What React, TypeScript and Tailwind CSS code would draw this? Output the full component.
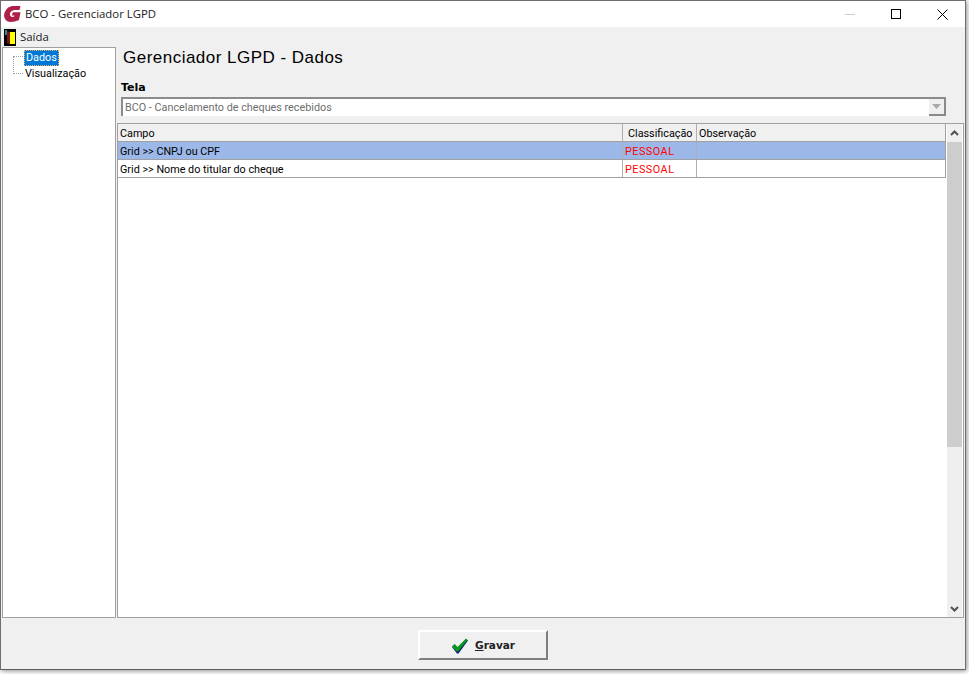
const rows = [
  { campo: 'Grid >> CNPJ ou CPF', selected: true },
  { campo: 'Grid >> Nome do titular do cheque', selected: false },
];

function AppLogo() {
  return (
    <svg width="17" height="16" viewBox="0 0 17 16">
      <path d="M8 0 L16.5 0 L15.5 4 L10.5 4 Q6.5 4.5 6 7.5 Q5.8 10.8 8.5 11 L10 10.8 L10.5 9.5 L7.8 9.5 L8.8 6.3 L16.5 6.3 L15 14 Q11 16 6.5 16 Q0.5 15.5 0 9.5 Q0.5 2 8 0 Z" fill="#b01f48" />
    </svg>
  );
}

function ExitIcon() {
  return (
    <svg width="12" height="17" viewBox="0 0 12 17">
      <rect x="0" y="0" width="12" height="17" fill="#000" />
      <rect x="1" y="1" width="2" height="5" fill="#1f8a9a" />
      <rect x="6" y="3" width="5" height="12" fill="#ffff00" />
      <path d="M3 2 L6 3 L6 15 L3 14 Z" fill="#7a1414" />
    </svg>
  );
}

function GreenCheck() {
  return (
    <svg width="18" height="18" viewBox="0 0 18 18">
      <path d="M1 10 L4 7.5 L7 11 L15 2 L17 3.5 L7.5 16.5 L6 16.5 Z" fill="#0b1f7a" />
      <path d="M1 9.5 L3.5 7 L6.5 10 L15 1.5 L16.5 3 L7 14.5 L5.5 14.5 Z" fill="#0c9a1c" />
    </svg>
  );
}

export default function App() {
  return (
    <div className="h-[674px] w-[969px] overflow-hidden bg-white font-['Roboto',sans-serif] text-[10.8px] text-black">
      <div className="flex h-[670px] w-[966px] flex-col border border-x-[#6e6e6e] border-t-[#6e6e6e] border-b-[#5f5f5f] bg-[#f0f0f0] shadow-[1px_1px_5px_rgba(0,0,0,0.45)]">
        {/* Title bar */}
        <div className="flex h-[26px] shrink-0 items-center bg-white pl-[3px]">
          <AppLogo />
          <span className="ml-[4px] font-['Open_Sans',sans-serif] text-[11.4px] text-[#1a1a1a]">BCO - Gerenciador LGPD</span>
          <div className="ml-auto flex items-center">
            <div className="flex w-[46px] justify-center"><div className="h-px w-[10px] bg-[#cccccc]" /></div>
            <div className="flex w-[46px] justify-center"><div className="size-[10px] border border-black" /></div>
            <div className="flex w-[46px] justify-center">
              <svg width="11" height="11" viewBox="0 0 11 11"><path d="M0.5 0.5 L10.5 10.5 M10.5 0.5 L0.5 10.5" stroke="#000" fill="none" /></svg>
            </div>
          </div>
        </div>

        {/* Menu */}
        <div className="flex h-[20px] shrink-0 items-center pl-[3px]">
          <ExitIcon />
          <span className="ml-[4px] font-['Open_Sans',sans-serif] text-[11.4px] text-[#1a1a1a]">Saída</span>
        </div>

        <div className="flex h-[571px] shrink-0 pl-px">
          {/* Tree */}
          <div className="relative h-[571px] w-[114px] border border-[#a0a0a0] bg-white">
            <div className="absolute top-[8px] left-[10px] h-[18px] w-[10px] border-b border-l border-dotted border-[#a0a0a0]" />
            <div className="absolute top-[8px] left-[10px] w-[10px] border-b border-dotted border-[#a0a0a0]" />
            <div className="flex flex-col items-start pt-[2px] pl-[21px]">
              <div className="flex h-[16px] items-center border border-dotted border-[#f0b060] bg-[#0078d7] px-px text-white">Dados</div>
              <div className="flex h-[16px] items-center px-px">Visualização</div>
            </div>
          </div>

          {/* Content */}
          <div className="flex h-[571px] min-w-0 flex-1 flex-col pr-px pl-px">
            <div className="flex h-[50px] shrink-0 flex-col pl-[6px]">
              <div className="mt-px font-['Liberation_Sans',sans-serif] text-[17px] leading-[20px] tracking-[0.48px]">Gerenciador LGPD - Dados</div>
              <div className="-ml-[2px] mt-[13px] font-['DejaVu_Sans',sans-serif] text-[11px] leading-[14px] font-bold">Tela</div>
            </div>

            <div className="mr-[18px] ml-[4px] flex h-[19px] shrink-0 items-center justify-between border-t-2 border-l-2 border-[#8c8c8c] bg-white pl-[2px] text-[#6d6d6d]">
              <span className="pt-px">BCO - Cancelamento de cheques recebidos</span>
              <div className="flex h-[17px] w-[17px] items-center justify-center border-r-2 border-b-2 border-r-[#8a8a8a] border-b-[#8a8a8a] bg-[#efefef]">
                <svg width="9" height="5" viewBox="0 0 9 5"><path d="M0 0 H9 L4.5 5 Z" fill="#a8a8a8" /></svg>
              </div>
            </div>

            {/* Grid */}
            <div className="mt-[7px] flex min-h-0 flex-1 border border-[#a0a0a0] bg-white">
              <div className="min-w-0 flex-1 pr-px">
                <div className="flex h-[18px] border-r border-b border-[#a0a0a0] bg-[#f0f0f0]">
                  <div className="w-[505px] border-r border-[#b0b0b0] pl-[2px] leading-[19px]">Campo</div>
                  <div className="w-[74px] border-r border-[#b0b0b0] pl-[5px] leading-[19px]">Classificação</div>
                  <div className="flex-1 pl-[2px] leading-[19px]">Observação</div>
                </div>
                {rows.map((row) => (
                  <div key={row.campo} className={`flex h-[18px] border-r border-b border-[#a0a0a0] ${row.selected ? 'bg-[#9cb8e8]' : 'bg-white'}`}>
                    <div className="w-[505px] border-r border-[#b0b0b0] pl-[2px] leading-[19px]">{row.campo}</div>
                    <div className="w-[74px] border-r border-[#b0b0b0] pl-[2px] leading-[19px] tracking-[0.5px] text-[#ff0000]">PESSOAL</div>
                    <div className="flex-1" />
                  </div>
                ))}
              </div>

              {/* Scrollbar */}
              <div className="mr-px flex w-[15px] shrink-0 flex-col bg-[#efefef]">
                <div className="flex h-[18px] items-center justify-center">
                  <svg width="9" height="6" viewBox="0 0 9 6"><path d="M1 5 L4.5 1.5 L8 5" stroke="#505050" strokeWidth="2" fill="none" /></svg>
                </div>
                <div className="h-[305px] bg-[#cdcdcd]" />
                <div className="flex-1" />
                <div className="flex h-[16px] items-center justify-center">
                  <svg width="9" height="6" viewBox="0 0 9 6"><path d="M1 1 L4.5 4.5 L8 1" stroke="#505050" strokeWidth="2" fill="none" /></svg>
                </div>
              </div>
            </div>
          </div>
        </div>

        {/* Footer */}
        <div className="flex flex-1 items-center justify-center pt-[3px]">
          <button className="flex h-[30px] w-[130px] items-center justify-center gap-[6px] border-2 border-t-white border-r-[#7f7f7f] border-b-[#7f7f7f] border-l-white bg-[#f0f0f0] pt-px font-['DejaVu_Sans',sans-serif] text-[10.5px] font-bold text-[#222]">
            <GreenCheck />
            <span><span className="underline">G</span>ravar</span>
          </button>
        </div>
      </div>
    </div>
  );
}
